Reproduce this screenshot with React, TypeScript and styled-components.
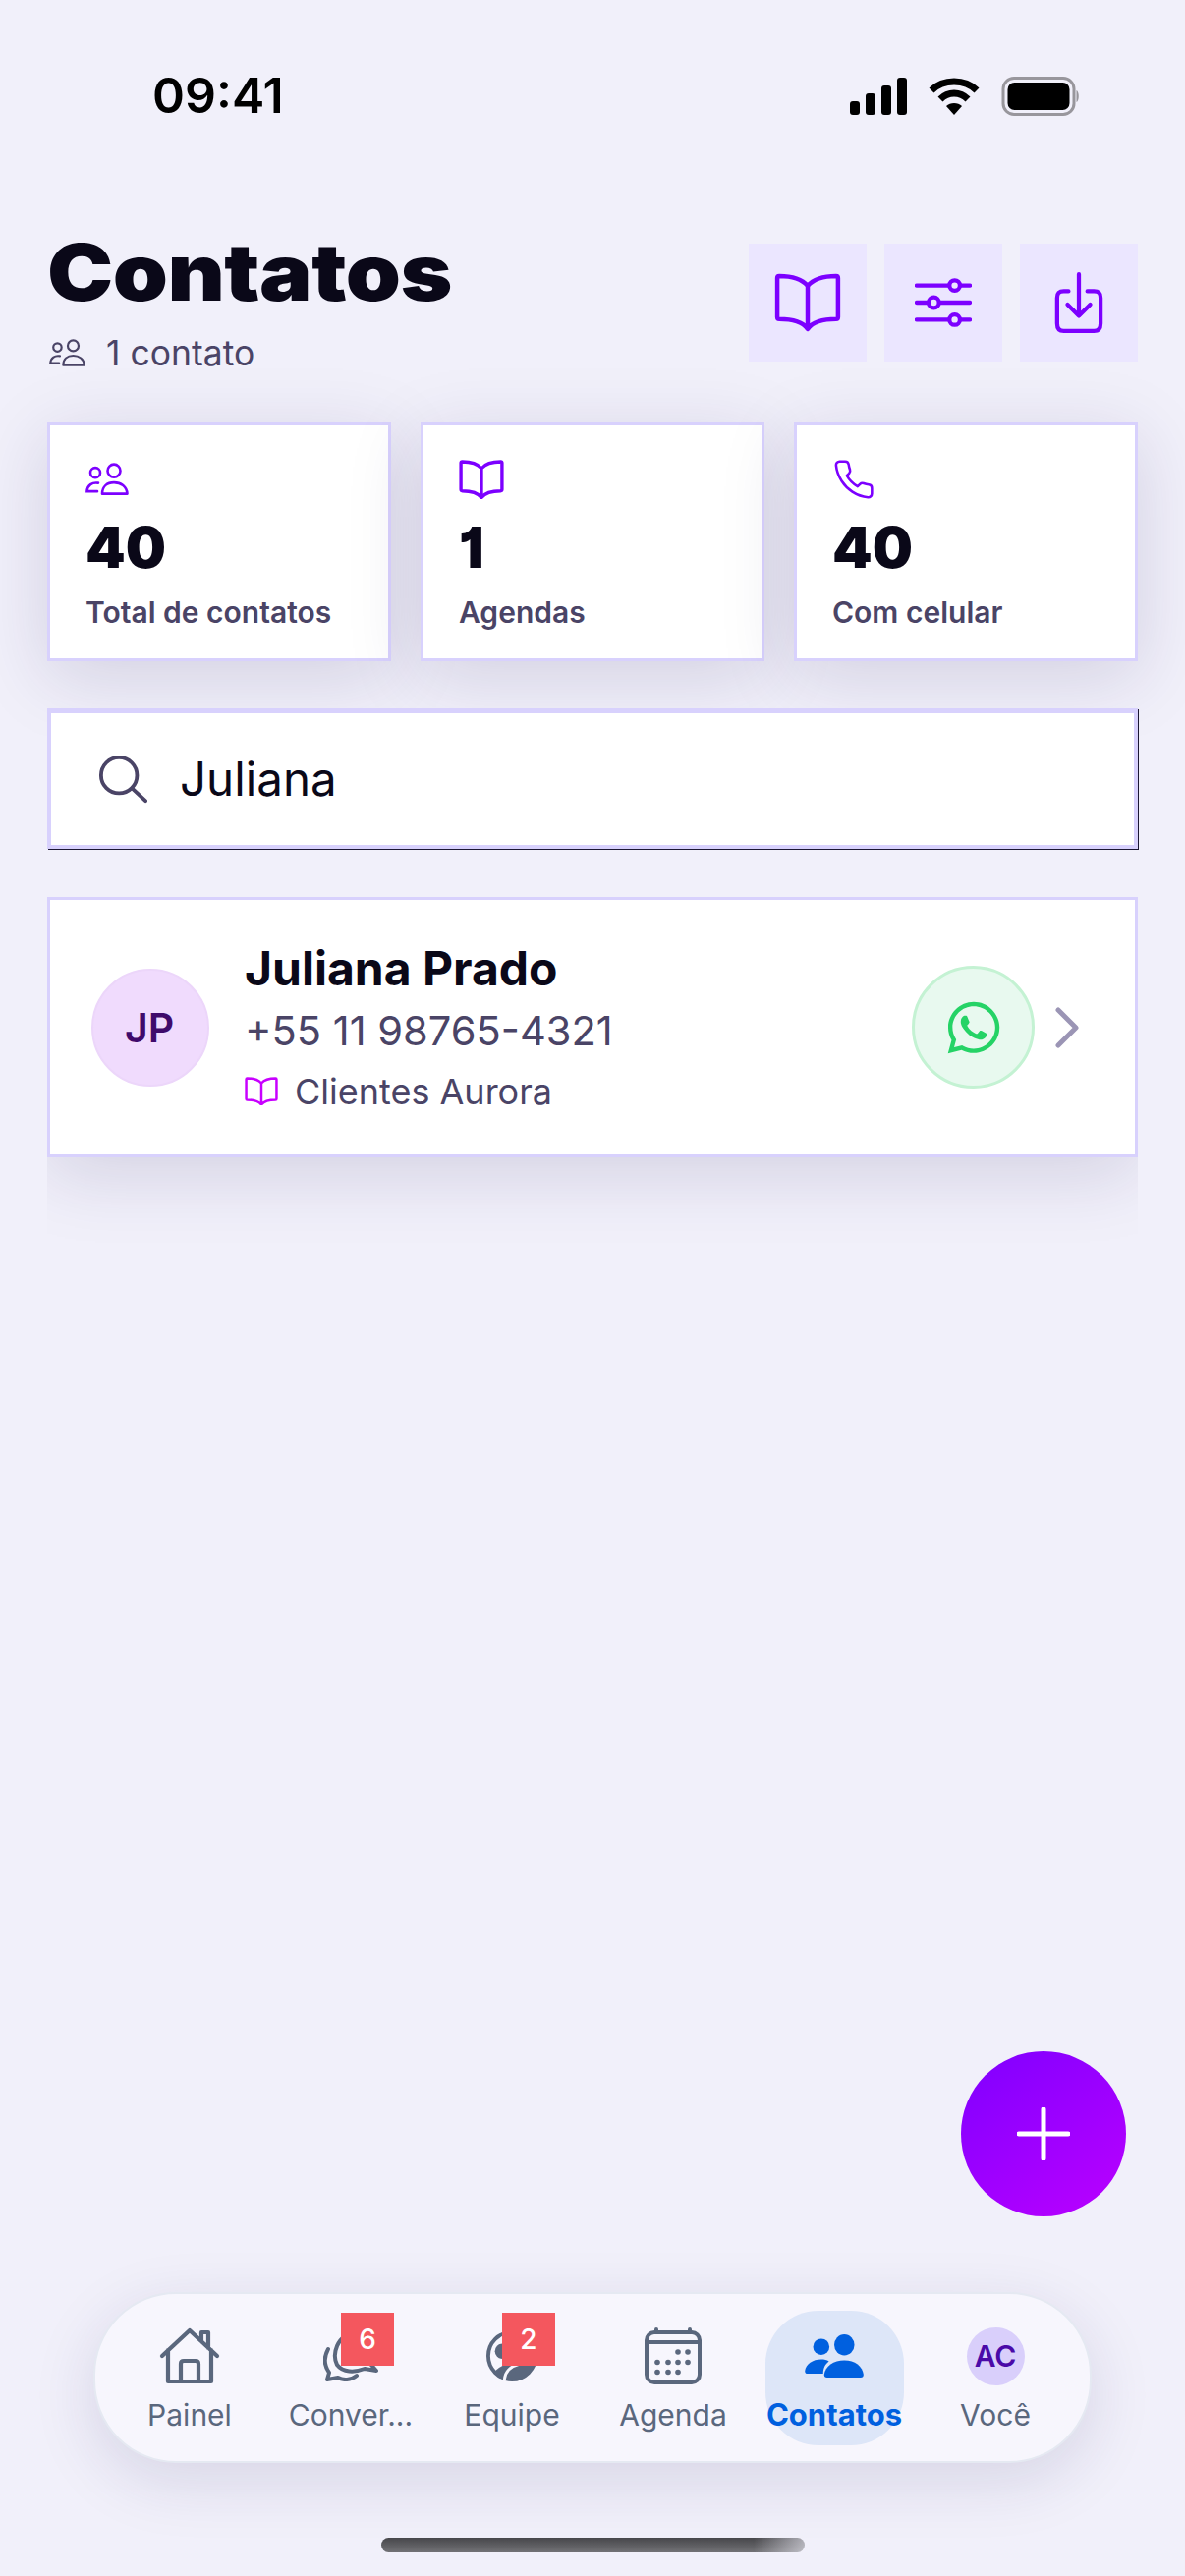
import React from 'react'
import styled, { createGlobalStyle } from 'styled-components'
import { FaWhatsapp } from 'react-icons/fa'

const colorPage = '#f1f0fa'
const colorInk = '#0a0818'
const colorMuted = '#4a4466'
const colorViolet = '#7c00ff'
const colorBorder = '#d8d1fd'
const colorNav = '#5a677d'
const cardShadow = '0 16px 70px rgba(40, 30, 90, 0.15)'

const GlobalStyle = createGlobalStyle`
  html, body {
    margin: 0;
    padding: 0;
    background: ${colorPage};
  }

  * {
    box-sizing: border-box;
  }
`

const Page = styled.div`
  width: 1206px;
  height: 2622px;
  display: flex;
  flex-direction: column;
  overflow: hidden;
  background: ${colorPage};
  font-family: Inter, 'Liberation Sans', sans-serif;
  color: ${colorInk};
`

const StatusBar = styled.div`
  height: 248px;
  padding: 72px 106px 0 155px;
  display: flex;
  align-items: flex-start;
  justify-content: space-between;
`

const StatusTime = styled.div`
  font-size: 50px;
  line-height: 50px;
  font-weight: 600;
  color: #000;
`

const StatusIcons = styled.div`
  display: flex;
  align-items: center;
  gap: 22px;
  margin-top: 6px;
`

const Main = styled.main`
  flex: 1;
  padding: 0 48px;
`

const Header = styled.header`
  display: flex;
  justify-content: space-between;
  align-items: flex-start;
`

const Title = styled.h1`
  margin: 0;
  font-size: 80px;
  line-height: 58px;
  font-weight: 900;
  letter-spacing: -0.5px;
  transform: scaleX(1.125);
  transform-origin: left center;
`

const SubRow = styled.div`
  margin-top: 33px;
  height: 40px;
  display: flex;
  align-items: center;
  gap: 20px;
  padding-left: 2px;
  font-size: 35.5px;
  color: ${colorMuted};
`

const HeaderActions = styled.div`
  display: flex;
  gap: 18px;
`

const ActionButton = styled.button`
  width: 120px;
  height: 120px;
  border: 0;
  padding: 0;
  display: flex;
  align-items: center;
  justify-content: center;
  background: #ebe6ff;
`

const StatsRow = styled.section`
  margin-top: 51px;
  display: grid;
  grid-template-columns: repeat(3, 350px);
  gap: 30px;
`

const StatCard = styled.div`
  height: 243px;
  padding: 33px 0 0 36px;
  background: #fff;
  border: 3px solid ${colorBorder};
  box-shadow: ${cardShadow};
`

const StatIcon = styled.div`
  height: 44px;
  display: flex;
  align-items: center;
`

const StatValue = styled.div`
  margin-top: 13px;
  font-size: 58px;
  line-height: 68px;
  font-weight: 900;
  font-feature-settings: 'cv01';
`

const StatLabel = styled.div`
  margin-top: 12px;
  font-size: 30px;
  line-height: 40px;
  font-weight: 600;
  color: ${colorMuted};
`

const SearchBox = styled.div`
  position: relative;
  margin-top: 48px;
  height: 143px;
  padding-left: 48px;
  display: flex;
  align-items: center;
  gap: 33px;
  background: #fff;
  border-style: solid;
  border-color: ${colorBorder};
  border-width: 5px 4px 4px 4px;
  box-shadow: 1px 1px 0 #1b1733;
`

const SearchText = styled.div`
  font-size: 47.5px;
  line-height: 60px;
  color: ${colorInk};
`

const ResultList = styled.section`
  margin-top: 49px;
  padding-bottom: 94px;
  overflow: hidden;
`

const ContactCard = styled.article`
  height: 265px;
  padding: 0 57px 0 42px;
  display: flex;
  align-items: center;
  background: #fff;
  border: 3px solid ${colorBorder};
  box-shadow: ${cardShadow};
`

const Avatar = styled.div`
  width: 120px;
  height: 120px;
  flex: none;
  padding-right: 2px;
  border-radius: 50%;
  display: flex;
  align-items: center;
  justify-content: center;
  background: #f0dbfd;
  border: 2px solid #ecd6fa;
  font-size: 41px;
  font-weight: 600;
  color: #3f0a6b;
`

const ContactInfo = styled.div`
  flex: 1;
  margin-left: 36px;
`

const ContactName = styled.div`
  font-size: 48px;
  line-height: 56px;
  font-weight: 700;
`

const ContactPhone = styled.div`
  margin-top: 7px;
  font-size: 41.6px;
  line-height: 56px;
  color: ${colorMuted};
`

const ContactBook = styled.div`
  margin-top: 11px;
  display: flex;
  align-items: center;
  gap: 17px;
  font-size: 36px;
  line-height: 46px;
  color: ${colorMuted};
`

const WhatsappButton = styled.button`
  width: 125px;
  height: 125px;
  padding: 0;
  display: flex;
  align-items: center;
  justify-content: center;
  border-radius: 50%;
  border: 3px solid #c4f2d3;
  background: #e8f9ef;
  color: #25d366;
`

const ChevronSlot = styled.div`
  margin-left: 21px;
  display: flex;
`

const Fab = styled.button`
  align-self: flex-end;
  width: 168px;
  height: 168px;
  margin: 0 60px 77px 0;
  padding: 0;
  border: 0;
  border-radius: 50%;
  display: flex;
  align-items: center;
  justify-content: center;
  background: linear-gradient(145deg, #7f00ff, #bb00ff);
`

const BottomNav = styled.nav`
  margin: 0 95px;
  height: 174px;
  padding: 0 14px;
  display: grid;
  grid-template-columns: repeat(6, 1fr);
  align-items: center;
  background: #f7f6fd;
  border: 2px solid #e5e9f2;
  border-radius: 84px;
  box-shadow: 0 18px 64px rgba(40, 30, 90, 0.13);
`

const NavItem = styled.div<{ $active?: boolean }>`
  position: relative;
  justify-self: center;
  width: ${p => (p.$active ? '141px' : '160px')};
  height: 137px;
  padding-top: 18px;
  display: flex;
  flex-direction: column;
  align-items: center;
  border-radius: 54px;
  background: ${p => (p.$active ? '#dde6f8' : 'transparent')};
`

const NavIcon = styled.div`
  height: 57px;
  display: flex;
  align-items: center;
  justify-content: center;
`

const NavLabel = styled.div<{ $active?: boolean }>`
  margin-top: 13px;
  font-size: ${p => (p.$active ? '31px' : '30px')};
  line-height: 36px;
  white-space: nowrap;
  font-weight: ${p => (p.$active ? 700 : 400)};
  color: ${p => (p.$active ? '#0060df' : colorNav)};
`

const NavBadge = styled.div`
  position: absolute;
  top: 2px;
  left: calc(50% - 10px);
  width: 54px;
  height: 54px;
  display: flex;
  align-items: center;
  justify-content: center;
  background: #f4575e;
  color: #fff;
  font-size: 28px;
  font-weight: 500;
`

const NavAvatar = styled.div`
  width: 59px;
  height: 59px;
  border-radius: 50%;
  display: flex;
  align-items: center;
  justify-content: center;
  background: #d9cffb;
  color: #4a0aa8;
  font-size: 30px;
  font-weight: 600;
`

const HomeIndicator = styled.div`
  align-self: center;
  width: 431px;
  height: 15px;
  margin: 76px 0 24px;
  border-radius: 8px;
  background: linear-gradient(90deg, transparent 88%, rgba(241, 240, 250, 0.6) 100%),
    linear-gradient(180deg, #47474b, #727276);
`

const BookIcon = ({ size, color, stroke = 4.5 }: { size: number; color: string; stroke?: number }) => (
  <svg width={size} height={size * 0.88} viewBox='0 0 68 60' fill='none' stroke={color} strokeWidth={stroke} strokeLinejoin='round' strokeLinecap='round'>
    <path d='M34 13C28 6 17 3 5 3C3.500 3 3 4 3 5V45C3 46.500 3.500 47 5 47C17 47 28 49 34 57C40 49 51 47 63 47C64.500 47 65 46.500 65 45V5C65 4 64.500 3 63 3C51 3 40 6 34 13ZM34 13V57' />
  </svg>
)

const UsersIcon = ({ size, color }: { size: number; color: string }) => (
  <svg width={size} height={size * 0.74} viewBox='0 0 45 33' fill='none' stroke={color} strokeWidth='2.600'>
    <circle cx='10' cy='10' r='5' />
    <circle cx='29' cy='8' r='6.500' />
    <path d='M17 31.500C17 24 22 20 29 20C36 20 42 24 42.500 31.500Z' strokeLinejoin='round' />
    <path d='M13 20.500C7 19.500 2 22.500 1.500 29H12' strokeLinecap='round' />
  </svg>
)

const SlidersIcon = () => (
  <svg width='58' height='54' viewBox='0 0 60 54' fill='none' stroke={colorViolet} strokeWidth='4.400' strokeLinecap='round'>
    <path d='M2 9H36M48 9H58M2 27H14M26 27H58M2 45H36M48 45H58' />
    <circle cx='42' cy='9' r='5.500' />
    <circle cx='20' cy='27' r='5.500' />
    <circle cx='42' cy='45' r='5.500' />
  </svg>
)

const DownloadIcon = () => (
  <svg width='50' height='64' viewBox='0 0 52 66' fill='none' stroke={colorViolet} strokeWidth='4.400' strokeLinecap='round' strokeLinejoin='round'>
    <path d='M15 21H10C5 21 3 23 3 28V55C3 60 5 63 10 63H42C47 63 49 60 49 55V28C49 23 47 21 42 21H35' />
    <path d='M26 3V47M14 35L26 47L38 35' />
  </svg>
)

const PhoneIcon = () => (
  <svg width='44' height='44' viewBox='0 0 24 24' fill='none' stroke={colorViolet} strokeWidth='1.400' strokeLinecap='round' strokeLinejoin='round'>
    <path d='M22 16.920v3a2 2 0 0 1-2.180 2 19.790 19.790 0 0 1-8.630-3.070 19.500 19.500 0 0 1-6-6 19.790 19.790 0 0 1-3.070-8.670A2 2 0 0 1 4.110 2h3a2 2 0 0 1 2 1.720 12.840 12.840 0 0 0 .7 2.810 2 2 0 0 1-.45 2.110L8.090 9.910a16 16 0 0 0 6 6l1.270-1.270a2 2 0 0 1 2.110-.45 12.840 12.840 0 0 0 2.810.7A2 2 0 0 1 22 16.920z' />
  </svg>
)

const SearchIcon = () => (
  <svg width='50' height='50' viewBox='0 0 52 50' fill='none' stroke={colorMuted} strokeWidth='4' strokeLinecap='round'>
    <circle cx='22' cy='21' r='19' />
    <path d='M36 35L50 48' />
  </svg>
)

const ChevronIcon = () => (
  <svg width='24' height='44' viewBox='0 0 24 44' fill='none' stroke='#9b95b5' strokeWidth='5' strokeLinecap='round' strokeLinejoin='round'>
    <path d='M3 4L21 22L3 40' />
  </svg>
)

const PlusIcon = () => (
  <svg width='54' height='54' viewBox='0 0 54 54' stroke='#fff' strokeWidth='5' strokeLinecap='round'>
    <path d='M27 2V52M2 27H52' />
  </svg>
)

const HouseIcon = () => (
  <svg width='62' height='58' viewBox='0 0 62 58' fill='none' stroke={colorNav} strokeWidth='4.200' strokeLinecap='round' strokeLinejoin='round'>
    <path d='M3 29L31 3L59 29M9 23V55H53V23M22 55V37C22 35 23 34 25 34H37C39 34 40 35 40 37V55M43 14V5H50V21' />
  </svg>
)

const ChatsIcon = () => (
  <svg width='56' height='52' viewBox='0 0 56 52' fill='none' stroke={colorNav} strokeWidth='4' strokeLinecap='round' strokeLinejoin='round'>
    <path d='M14 35C9 25 13 4 33 3C50 3 58 20 47 33L54 41L42 39C32 43 20 43 14 35Z' />
    <path d='M5 19C0 28 1 36 6 43L4 50L15 48C20 51 28 51 34 46' />
  </svg>
)

const TeamIcon = () => (
  <svg width='52' height='52' viewBox='0 0 54 54' fill='none'>
    <circle cx='27' cy='27' r='25' stroke={colorNav} strokeWidth='4' />
    <circle cx='17' cy='22' r='8' fill={colorNav} />
    <path d='M8 44C18 34 40 26 50 36C46 46 36 52 27 52C20 52 13 49 8 44Z' fill={colorNav} />
    <path d='M19 52C20 43 26 38 34 36' stroke='#f7f6fd' strokeWidth='3' strokeLinecap='round' />
  </svg>
)

const CalendarIcon = () => {
  const dots = [
    [34, 25],
    [44, 25],
    [13, 35.500],
    [24, 35.500],
    [34, 35.500],
    [44, 35.500],
    [13, 45.500],
    [24, 45.500],
    [34, 45.500],
  ]
  return (
    <svg width='58' height='58' viewBox='0 0 58 58' fill='none' stroke={colorNav} strokeWidth='4' strokeLinecap='round'>
      <rect x='2' y='5' width='54' height='51' rx='8' />
      <path d='M2 15H56M12 2V5M46 2V5' />
      {dots.map(([cx, cy]) => (
        <circle key={`${cx}-${cy}`} cx={cx} cy={cy} r='2.800' fill={colorNav} stroke='none' />
      ))}
    </svg>
  )
}

const UsersSolidIcon = () => (
  <svg width='61' height='44' viewBox='0 0 62 45' fill='#0060df'>
    <circle cx='17' cy='13' r='8.500' />
    <ellipse cx='41' cy='11' rx='10.500' ry='11' />
    <path d='M0 38C1 31 8 26 17 26C20 26 23 26.500 25 28C21 31 19 35 19 41H3C1 41 0 40 0 38Z' />
    <path d='M20 42C21 33 30 27 41 27C52 27 60 33 61 42C61 44 60 45 58 45H23C21 45 20 44 20 42Z' />
  </svg>
)

const SignalIcon = () => (
  <svg width='58' height='38' viewBox='0 0 58 38' fill='#000'>
    <rect x='0' y='24' width='10' height='14' rx='3' />
    <rect x='16' y='16' width='10' height='22' rx='3' />
    <rect x='32' y='8' width='10' height='30' rx='3' />
    <rect x='48' y='0' width='10' height='38' rx='3' />
  </svg>
)

const WifiIcon = () => (
  <svg width='52' height='38' viewBox='0 0 52 38' fill='none' stroke='#000' strokeWidth='7'>
    <path d='M3 13C15 1 37 1 49 13' />
    <path d='M12 22C20 14 32 14 40 22' />
    <path d='M26 38L18 29C22 25 30 25 34 29Z' fill='#000' stroke='none' />
  </svg>
)

const BatteryIcon = () => (
  <svg width='81' height='40' viewBox='0 0 80 40' fill='none'>
    <rect x='1.500' y='1.500' width='72' height='37' rx='11' stroke='#98969c' strokeWidth='3' />
    <rect x='6' y='6' width='63' height='28' rx='7' fill='#000' />
    <path d='M76 14C79 15 79 25 76 26Z' fill='#98969c' />
  </svg>
)

export default function App() {
  return (
    <>
      <GlobalStyle />
      <Page>
        <StatusBar>
          <StatusTime>09:41</StatusTime>
          <StatusIcons>
            <SignalIcon />
            <WifiIcon />
            <BatteryIcon />
          </StatusIcons>
        </StatusBar>
        <Main>
          <Header>
            <div>
              <Title>Contatos</Title>
              <SubRow>
                <UsersIcon size={38} color={colorMuted} />1 contato
              </SubRow>
            </div>
            <HeaderActions>
              <ActionButton>
                <BookIcon size={68} color={colorViolet} />
              </ActionButton>
              <ActionButton>
                <SlidersIcon />
              </ActionButton>
              <ActionButton>
                <DownloadIcon />
              </ActionButton>
            </HeaderActions>
          </Header>
          <StatsRow>
            <StatCard>
              <StatIcon>
                <UsersIcon size={45} color={colorViolet} />
              </StatIcon>
              <StatValue>40</StatValue>
              <StatLabel>Total de contatos</StatLabel>
            </StatCard>
            <StatCard>
              <StatIcon>
                <BookIcon size={46} color={colorViolet} stroke={5} />
              </StatIcon>
              <StatValue>1</StatValue>
              <StatLabel>Agendas</StatLabel>
            </StatCard>
            <StatCard>
              <StatIcon>
                <PhoneIcon />
              </StatIcon>
              <StatValue>40</StatValue>
              <StatLabel>Com celular</StatLabel>
            </StatCard>
          </StatsRow>
          <SearchBox>
            <SearchIcon />
            <SearchText>Juliana</SearchText>
          </SearchBox>
          <ResultList>
            <ContactCard>
              <Avatar>JP</Avatar>
              <ContactInfo>
                <ContactName>Juliana Prado</ContactName>
                <ContactPhone>+55 11 98765-4321</ContactPhone>
                <ContactBook>
                  <BookIcon size={34} color='#c800ff' stroke={5} />
                  Clientes Aurora
                </ContactBook>
              </ContactInfo>
              <WhatsappButton>
                <FaWhatsapp size={60} />
              </WhatsappButton>
              <ChevronSlot>
                <ChevronIcon />
              </ChevronSlot>
            </ContactCard>
          </ResultList>
        </Main>
        <Fab>
          <PlusIcon />
        </Fab>
        <BottomNav>
          <NavItem>
            <NavIcon>
              <HouseIcon />
            </NavIcon>
            <NavLabel>Painel</NavLabel>
          </NavItem>
          <NavItem>
            <NavIcon>
              <ChatsIcon />
            </NavIcon>
            <NavLabel>Conver...</NavLabel>
            <NavBadge>6</NavBadge>
          </NavItem>
          <NavItem>
            <NavIcon>
              <TeamIcon />
            </NavIcon>
            <NavLabel>Equipe</NavLabel>
            <NavBadge>2</NavBadge>
          </NavItem>
          <NavItem>
            <NavIcon>
              <CalendarIcon />
            </NavIcon>
            <NavLabel>Agenda</NavLabel>
          </NavItem>
          <NavItem $active>
            <NavIcon>
              <UsersSolidIcon />
            </NavIcon>
            <NavLabel $active>Contatos</NavLabel>
          </NavItem>
          <NavItem>
            <NavIcon>
              <NavAvatar>AC</NavAvatar>
            </NavIcon>
            <NavLabel>Você</NavLabel>
          </NavItem>
        </BottomNav>
        <HomeIndicator />
      </Page>
    </>
  )
}
